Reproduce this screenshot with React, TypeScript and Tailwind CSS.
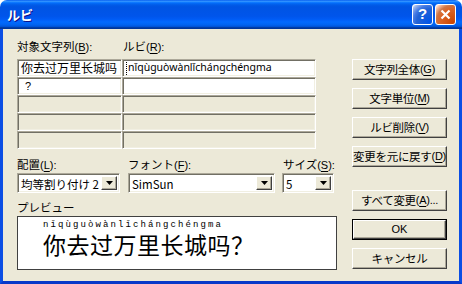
import React from "react";

const raised =
  "border border-t-white border-l-white border-r-[#404040] border-b-[#404040] shadow-[inset_-1px_-1px_#aca899] bg-[#ece9d8]";
const sunken =
  "border border-t-[#aca899] border-l-[#aca899] border-r-white border-b-white shadow-[inset_1px_1px_#716f64,inset_-1px_-1px_#f1efe2]";

function Key({ k, tail = "" }: { k: string; tail?: string }) {
  return (
    <span className="font-['Liberation_Sans',sans-serif] text-[11px]">
      (<span className="underline underline-offset-2">{k}</span>){tail}
    </span>
  );
}

function Btn({ children, def }: { children: React.ReactNode; def?: boolean }) {
  if (def) {
    return (
      <div className="h-[21px] border border-black">
        <div className={`h-full flex items-center justify-center ${raised}`}>{children}</div>
      </div>
    );
  }
  return (
    <div className={`h-[21px] flex items-center justify-center whitespace-nowrap tracking-[-0.3px] ${raised}`}>
      {children}
    </div>
  );
}

function Arrow() {
  return (
    <div className={`w-[16px] h-full flex items-center justify-center ${raised}`}>
      <svg width="7" height="4" viewBox="0 0 7 4">
        <path d="M0 0H7L3.5 4Z" fill="#000" />
      </svg>
    </div>
  );
}

function Combo({ value, w }: { value: string; w: string }) {
  return (
    <div className={`${w} h-[20px] bg-white flex p-[2px] ${sunken}`}>
      <div className="flex-1 pl-[1px] leading-[16px] whitespace-nowrap">{value}</div>
      <Arrow />
    </div>
  );
}

function Cell({ w, white, children }: { w: string; white?: boolean; children?: React.ReactNode }) {
  return (
    <div
      className={`${w} h-[18px] flex items-center pl-[3px] whitespace-nowrap ${sunken} ${
        white ? "bg-white" : "bg-[#ece9d8]"
      }`}
    >
      {children}
    </div>
  );
}

export default function App() {
  return (
    <div className="w-[462px] h-[284px] flex flex-col font-['Noto_Sans_CJK_JP',sans-serif] text-[11.5px] text-black bg-white">
      {/* title bar */}
      <div className="h-[29px] rounded-t-[7px] flex items-center pl-[7px] pr-[6px] bg-[linear-gradient(to_bottom,#0058ee_0%,#3593ff_4%,#288eff_6%,#127dff_8%,#036ffc_10%,#0262ee_14%,#0057e5_20%,#0054e3_24%,#0055eb_56%,#005bf5_66%,#026afe_76%,#0062ef_86%,#0052d6_92%,#0040ab_94%,#003092_100%)]">
        <span className="flex-1 text-white font-bold text-[13px] [text-shadow:1px_1px_#0f1089]">ルビ</span>
        <div className="flex gap-[2px]">
          <div className="w-[21px] h-[21px] rounded-[3px] border border-white flex items-center justify-center bg-[radial-gradient(circle_at_90%_90%,#0054e9_0%,#2263d5_55%,#4479e4_70%,#a3bbec_90%,#fff_100%)] text-white font-bold text-[15px] font-['Liberation_Sans',sans-serif]">
            ?
          </div>
          <div className="w-[21px] h-[21px] rounded-[3px] border border-white flex items-center justify-center bg-[radial-gradient(circle_at_90%_90%,#cc4600_0%,#dc6527_55%,#cd7546_70%,#ffccb2_90%,#fff_100%)]">
            <svg width="11" height="11" viewBox="0 0 11 11">
              <path d="M1.5 1.5L9.5 9.5M9.5 1.5L1.5 9.5" stroke="#fff" strokeWidth="2.2" />
            </svg>
          </div>
        </div>
      </div>

      {/* body */}
      <div className="flex-1 flex bg-[#ece9d8] border-x-[3px] border-b-[3px] border-x-[#0b4ee4] border-b-[#0838c9] pl-[14px] pt-[11px]">
        <div className="w-[320px] flex flex-col">
          <div className="flex h-[13px] leading-[13px]">
            <span className="w-[106px]">
              対象文字列<Key k="B" tail=":" />
            </span>
            <span>
              ルビ<Key k="R" tail=":" />
            </span>
          </div>
          <div className="mt-[6px] flex flex-col w-[299px]">
            <div className="flex">
              <Cell w="w-[105px]" white>
                <span className="text-[12px]">你去过万里长城吗</span>
              </Cell>
              <Cell w="w-[194px]" white>
                <span className="h-[13px] border-l border-dotted border-black mr-[1px]" />
                <span className="font-['Noto_Sans',sans-serif] text-[10.5px]">nǐqùguòwànlǐchángchéngma</span>
              </Cell>
            </div>
            <div className="flex">
              <Cell w="w-[105px]" white>
                <span className="pl-[4px] font-['Liberation_Sans',sans-serif] text-[11px]">?</span>
              </Cell>
              <Cell w="w-[194px]" white />
            </div>
            {[0, 1, 2].map((i) => (
              <div key={i} className="flex">
                <Cell w="w-[105px]" />
                <Cell w="w-[194px]" />
              </div>
            ))}
          </div>
          <div className="mt-[9px] flex h-[13px] leading-[13px]">
            <span className="w-[111px]">
              配置<Key k="L" tail=":" />
            </span>
            <span className="w-[155px]">
              フォント<Key k="F" tail=":" />
            </span>
            <span>
              サイズ<Key k="S" tail=":" />
            </span>
          </div>
          <div className="mt-[2px] flex">
            <Combo w="w-[103px]" value="均等割り付け 2" />
            <div className="w-[8px]" />
            <Combo w="w-[147px]" value="SimSun" />
            <div className="w-[7px]" />
            <Combo w="w-[52px]" value="5" />
          </div>
          <div className="mt-[8px] h-[13px] leading-[13px]">プレビュー</div>
          <div className="mt-[2px] h-[54px] w-[320px] bg-white border border-[#404040] flex flex-col pl-[25px] pt-[4px]">
            <div className="font-['Liberation_Mono',monospace] text-[9px] leading-[9px] tracking-[2.1px]">
              nǐqùguòwànlǐchángchéngma
            </div>
            <div className="font-['Noto_Sans_CJK_SC',sans-serif] text-[23px] leading-[23px] tracking-[0.5px] mt-[3px]">
              你去过万里长城吗？
            </div>
          </div>
        </div>

        <div className="ml-[15px] w-[95px] flex flex-col pt-[19px]">
          <div className="flex flex-col gap-[8px]">
            <Btn>
              文字列全体<Key k="G" />
            </Btn>
            <Btn>
              文字単位<Key k="M" />
            </Btn>
            <Btn>
              ルビ削除<Key k="V" />
            </Btn>
            <Btn>
              変更を元に戻す<Key k="D" />
            </Btn>
          </div>
          <div className="mt-[23px] flex flex-col gap-[8px]">
            <Btn>
              すべて変更<Key k="A" tail="..." />
            </Btn>
            <Btn def>
              <span className="font-['Liberation_Sans',sans-serif] text-[11px]">OK</span>
            </Btn>
            <Btn>キャンセル</Btn>
          </div>
        </div>
      </div>
    </div>
  );
}
